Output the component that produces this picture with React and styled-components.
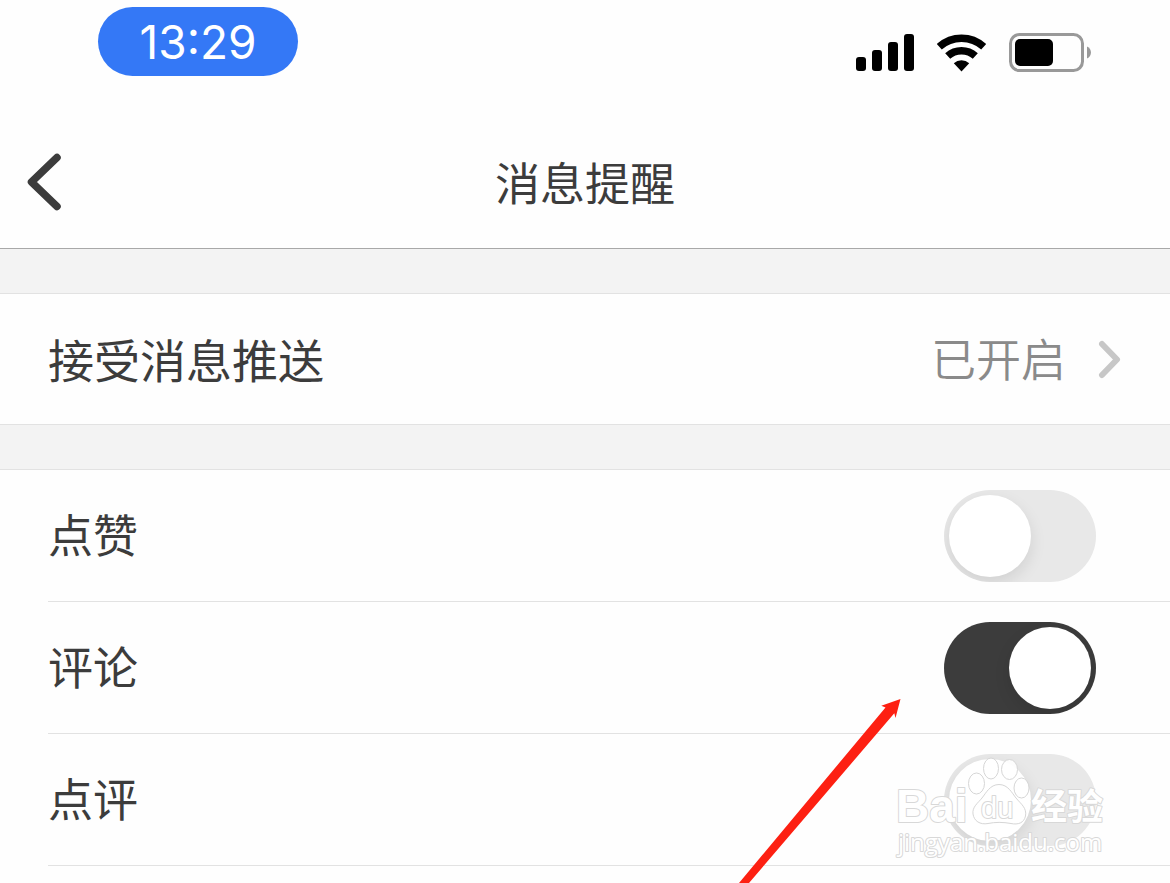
import { useState } from 'react'
import styled, { createGlobalStyle } from 'styled-components'

const GlobalStyle = createGlobalStyle`
  * {
    box-sizing: border-box;
  }
  body {
    margin: 0;
    background: #fefefe;
    color: #3c3c3c;
    font-family: "Noto Sans CJK SC", sans-serif;
  }
`

const Page = styled.div`
  position: relative;
  display: flex;
  flex-direction: column;
  min-height: 100vh;
  overflow: hidden;
`

const StatusBar = styled.div`
  display: flex;
  align-items: flex-start;
  justify-content: space-between;
  height: 116px;
  padding: 7px 78px 0 98px;
`

const Clock = styled.time`
  width: 200px;
  height: 69px;
  border-radius: 35px;
  background: #3478f6;
  color: #fff;
  font-family: Inter, sans-serif;
  font-size: 46px;
  line-height: 70px;
  text-align: center;
`

const StatusIcons = styled.div`
  display: flex;
  align-items: center;
  gap: 22px;
  padding-top: 26px;
`

const Header = styled.header`
  display: grid;
  grid-template-columns: 96px 1fr 96px;
  align-items: center;
  height: 133px;
  border-bottom: 1px solid #a8a8a8;
`

const BackButton = styled.button`
  display: flex;
  padding: 0 0 0 26px;
  border: 0;
  background: none;
  color: #3c3c3c;
  cursor: pointer;
`

const Title = styled.h1`
  margin: 0;
  font-size: 45px;
  font-weight: 400;
  line-height: 64px;
  text-align: center;
`

const Gap = styled.div`
  height: 44px;
  background: #f3f3f3;
`

const Section = styled.section`
  border-top: 1px solid #e2e2e2;
`

const LinkRow = styled.a`
  display: flex;
  align-items: center;
  justify-content: space-between;
  height: 131px;
  padding: 0 48px;
  border-bottom: 1px solid #e2e2e2;
  color: #3c3c3c;
  text-decoration: none;
`

const RowText = styled.span`
  padding-bottom: 3px;
  font-size: ${({ $large }) => ($large ? '46px' : '45px')};
  line-height: 64px;
`

const RowValue = styled.span`
  display: flex;
  align-items: center;
  gap: 32px;
  color: #8a8a8a;
  font-weight: 350;
`

const ToggleRow = styled.label`
  display: flex;
  align-items: center;
  justify-content: space-between;
  height: 132px;
  margin-left: 48px;
  padding-right: 74px;
  border-bottom: 1px solid #e2e2e2;
  cursor: pointer;
`

const Switch = styled.input.attrs({ type: 'checkbox', role: 'switch' })`
  appearance: none;
  display: flex;
  align-items: center;
  width: 152px;
  height: 92px;
  margin: 0;
  padding: 0 5px;
  overflow: hidden;
  border-radius: 46px;
  background: #e8e8e8;
  cursor: pointer;

  &::before {
    content: '';
    width: 82px;
    height: 82px;
    border-radius: 50%;
    background: #fff;
    box-shadow: 0 6px 16px rgba(0, 0, 0, 0.1);
  }

  &:checked {
    justify-content: flex-end;
    background: #3c3c3c;
  }
`

const Arrow = styled.svg`
  position: absolute;
  top: 698px;
  right: 269px;
  pointer-events: none;
`

const Watermark = styled.svg`
  position: absolute;
  top: 750px;
  right: 60px;
  pointer-events: none;
`

const items = [
  { name: '点赞', on: false },
  { name: '评论', on: true },
  { name: '点评', on: false },
]

function SignalIcon() {
  return (
    <svg width="59" height="38" viewBox="0 0 59 38" aria-hidden="true">
      <rect x="0" y="23" width="10" height="14" rx="3" />
      <rect x="16" y="16" width="10" height="21" rx="3" />
      <rect x="32" y="8" width="10" height="29" rx="3" />
      <rect x="48" y="0" width="10" height="37" rx="3" />
    </svg>
  )
}

function WifiIcon() {
  return (
    <svg width="50" height="38" viewBox="0 0 50 38" aria-hidden="true">
      <g fill="none" stroke="#000" strokeWidth="7.5">
        <path d="M2.300 12.800A33.200 33.200 0 0 1 46.700 12.800" />
        <path d="M10.700 22A20.500 20.500 0 0 1 38.300 22" />
      </g>
      <path d="M24.500 37.500L16.800 29.200A11.500 11.500 0 0 1 32.200 29.200Z" />
    </svg>
  )
}

function BatteryIcon() {
  return (
    <svg width="83" height="39" viewBox="0 0 83 39" aria-hidden="true">
      <rect x="1.5" y="1.5" width="72" height="36" rx="9" fill="none" stroke="#999" strokeWidth="3" />
      <rect x="6" y="6" width="38" height="27" rx="5" />
      <path d="M78 13.5C83.3 15.500 83.300 23.500 78 25.500Z" fill="#999" />
    </svg>
  )
}

function BaiduWatermark() {
  return (
    <Watermark width="220" height="120" viewBox="890 750 220 120" role="img" aria-label="Baidu 经验">
      <g fill="#fff" fillOpacity="0.9" stroke="#d6d6d6" strokeWidth="1">
        <ellipse cx="976.500" cy="783.500" rx="8" ry="10.500" />
        <ellipse cx="991" cy="768.500" rx="7.500" ry="10.500" />
        <ellipse cx="1009.500" cy="769.500" rx="8" ry="10" />
        <ellipse cx="1021.500" cy="788" rx="7.500" ry="10" />
        <path d="M999 784.500C1008 784.500 1012 793 1016 798C1021 804 1027 808 1025.500 816C1024 823 1018 825 1011 823.500C1003 822 995 822 988 823.500C980 825 974 821 973 814C972 807 978 803 982 798C986 793 990 784.500 999 784.500Z" />
      </g>
      <g
        fill="#fff"
        stroke="#d8d8d8"
        strokeWidth="2"
        paintOrder="stroke"
        strokeLinejoin="round"
        fontFamily='"Liberation Sans", "Noto Sans CJK SC", sans-serif'
        fontWeight="700"
      >
        <text x="896" y="822" fontSize="46">Bai</text>
        <text x="981" y="818" fontSize="29" fontWeight="400">du</text>
        <text x="1031" y="820" fontSize="36">经验</text>
        <text x="898" y="851" fontSize="24" fontWeight="500" fontFamily='"Open Sans", sans-serif'>
          jingyan.baidu.com
        </text>
      </g>
    </Watermark>
  )
}

export default function App() {
  const [settings, setSettings] = useState(items)

  const toggle = (name) =>
    setSettings(settings.map((s) => (s.name === name ? { ...s, on: !s.on } : s)))

  return (
    <>
      <GlobalStyle />
      <Page>
        <StatusBar>
          <Clock>13:29</Clock>
          <StatusIcons>
            <SignalIcon />
            <WifiIcon />
            <BatteryIcon />
          </StatusIcons>
        </StatusBar>
        <Header>
          <BackButton aria-label="返回">
            <svg width="38" height="60" viewBox="0 0 38 60" fill="none" aria-hidden="true">
              <path
                d="M31 5.500L5.500 30L31 54.500"
                stroke="currentColor"
                strokeWidth="7.5"
                strokeLinecap="round"
                strokeLinejoin="round"
              />
            </svg>
          </BackButton>
          <Title>消息提醒</Title>
        </Header>
        <Gap />
        <Section>
          <LinkRow href="#push">
            <RowText $large>接受消息推送</RowText>
            <RowValue>
              <RowText>已开启</RowText>
              <svg width="24" height="40" viewBox="0 0 24 40" fill="none" aria-hidden="true">
                <path
                  d="M4 5L19 20.500L4 36"
                  stroke="#c7c7c7"
                  strokeWidth="6"
                  strokeLinecap="round"
                  strokeLinejoin="round"
                />
              </svg>
            </RowValue>
          </LinkRow>
        </Section>
        <Gap />
        <Section>
          {settings.map((s) => (
            <ToggleRow key={s.name}>
              <RowText>{s.name}</RowText>
              <Switch checked={s.on} onChange={() => toggle(s.name)} />
            </ToggleRow>
          ))}
        </Section>
        <Arrow width="163" height="185" viewBox="738 698 163 185" aria-hidden="true">
          <path
            d="M900.500 699L881.300 705.700L885.500 707.500L739 883H749L894.300 713.300L895.500 718Z"
            fill="#fd2012"
          />
        </Arrow>
        <BaiduWatermark />
      </Page>
    </>
  )
}
